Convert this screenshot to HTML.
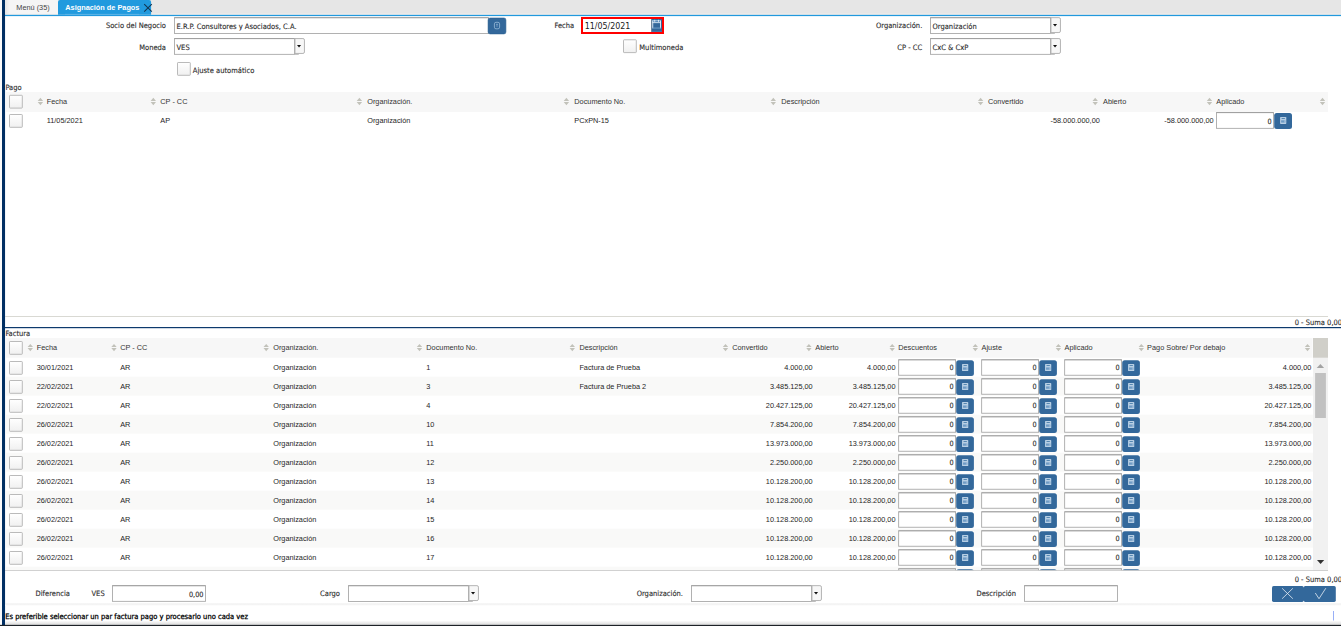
<!DOCTYPE html>
<html lang="es"><head><meta charset="utf-8"><title>Asignación de Pagos</title>
<style>
html,body{margin:0;padding:0;}
body{width:1341px;height:626px;position:relative;overflow:hidden;background:#fff;font-family:"Liberation Sans",sans-serif;font-size:7.33px;color:#222;}
#shapes{position:absolute;left:0;top:0;}
#txt div{position:absolute;white-space:nowrap;line-height:10px;}
.g{font-family:"Liberation Sans",sans-serif;font-size:7.33px;color:#1e1e1e;}
.f{font-family:"DejaVu Sans Condensed","Liberation Sans",sans-serif;font-size:7.5px;color:#2e2e2e;-webkit-text-stroke:0.12px #2e2e2e;}
.n{font-family:"DejaVu Sans Condensed","Liberation Sans",sans-serif;font-size:7.2px;color:#262626;-webkit-text-stroke:0.1px #262626;}
.d{font-family:"DejaVu Sans Condensed","Liberation Sans",sans-serif;font-size:8.8px;color:#222;line-height:12px !important;}
.r{text-align:right;}
</style></head><body>
<svg id="shapes" width="1341" height="626" viewBox="0 0 1341 626">
<defs>
<linearGradient id="cbg" x1="0" y1="0" x2="0" y2="1"><stop offset="0" stop-color="#ffffff"/><stop offset="1" stop-color="#f0f0f0"/></linearGradient>
<linearGradient id="tabg" x1="0" y1="0" x2="1" y2="0"><stop offset="0" stop-color="#e6e6e6"/><stop offset="0.09" stop-color="#f5f5f5"/><stop offset="1" stop-color="#f5f5f5"/></linearGradient>
<linearGradient id="botg" x1="0" y1="0" x2="0" y2="1"><stop offset="0" stop-color="#ffffff"/><stop offset="1" stop-color="#dadada"/></linearGradient>
<linearGradient id="stg" x1="0" y1="0" x2="0" y2="1"><stop offset="0" stop-color="#ececec"/><stop offset="1" stop-color="#ffffff"/></linearGradient>
<clipPath id="gridclip"><rect x="5" y="357.7" width="1309" height="212.6"/></clipPath>
</defs>
<rect x="0" y="0" width="1341" height="626" fill="#fff"/>
<rect x="0" y="0" width="1341" height="14.8" fill="#e6e6e6"/>
<rect x="5" y="13.8" width="1336" height="1.05" fill="#fff4ee"/>
<rect x="0" y="0" width="2" height="626" fill="#fafafa"/>
<rect x="5" y="14.8" width="1336" height="1.3" fill="#2299dd"/>
<rect x="2" y="0" width="3.05" height="626" fill="#002f63"/>
<rect x="5" y="0" width="53" height="13.9" fill="url(#tabg)"/>
<path d="M58 14.8 V2 a2 2 0 0 1 2 -2 H149.1 a2 2 0 0 1 2 2 V14.8 Z" fill="#219ade"/>
<path d="M65 14.3 H139" fill="none" stroke="#6cbdea" stroke-width="0.5"/>
<path d="M144.2 4.1 L151.8 11.7 M151.8 4.1 L144.2 11.7" fill="none" stroke="#123450" stroke-width="1.05"/>
<rect x="174.45" y="17.65" width="314.1" height="15.799999999999999" fill="#fff" stroke="#a9a9a9" stroke-width="0.9"/>
<path d="M174.5 17.75 H488.5" fill="none" stroke="#969696" stroke-width="0.7"/>
<rect x="488.1" y="18" width="17.8" height="15.9" fill="#33689b" rx="2" stroke="#2a6090" stroke-width="0.6"/>
<rect x="494.4" y="22.3" width="5.2" height="6.5" fill="none" rx="1.6" stroke="#8fb2d2" stroke-width="0.9"/>
<path d="M496 24.3 h2 M497 24.3 v2.6" fill="none" stroke="#8fb2d2" stroke-width="0.7"/>
<rect x="582" y="18" width="81" height="15" fill="#fff" stroke="#ff0000" stroke-width="2"/>
<rect x="651.3" y="19" width="10.7" height="12.9" fill="#33689b"/>
<rect x="651.3" y="19" width="0.6" height="12.9" fill="#6a7a88"/>
<rect x="652.3" y="20.3" width="8.6" height="2.4" fill="#5a8dbd"/>
<rect x="652.3" y="20.5" width="0.9" height="7.8" fill="#e6eff8"/>
<rect x="660.0" y="20.5" width="0.9" height="7.8" fill="#e6eff8"/>
<rect x="652.3" y="22.3" width="8.6" height="0.8" fill="#e6eff8"/>
<rect x="652.3" y="20.2" width="8.6" height="0.7" fill="#a9c6e0"/>
<rect x="654.3" y="19.8" width="0.9" height="2.0" fill="#e6eff8"/>
<rect x="658.0" y="19.8" width="0.9" height="2.0" fill="#e6eff8"/>
<rect x="652.3" y="27.6" width="8.6" height="0.9" fill="#79a4cb"/>
<rect x="930.45" y="17.65" width="120.1" height="15.799999999999999" fill="#fff" stroke="#a9a9a9" stroke-width="0.9"/>
<path d="M930.5 17.75 H1050.5" fill="none" stroke="#969696" stroke-width="0.7"/>
<rect x="1050" y="33.0" width="4.8" height="0.9" fill="#b9b9b9"/>
<path d="M1050.95 17.65 h8 a1.5 1.5 0 0 1 1.5 1.5 v11.9 a1.5 1.5 0 0 1 -1.5 1.5 h-8 z" fill="#f7f7f7" stroke="#ababab" stroke-width="0.9"/>
<path d="M1053 24.1 h4.1 l-2.05 2.5 z" fill="#111"/>
<rect x="174.45" y="38.550000000000004" width="120.1" height="15.799999999999999" fill="#fff" stroke="#a9a9a9" stroke-width="0.9"/>
<path d="M174.5 38.65 H294.5" fill="none" stroke="#969696" stroke-width="0.7"/>
<rect x="294" y="53.900000000000006" width="4.8" height="0.9" fill="#b9b9b9"/>
<path d="M294.95 38.550000000000004 h8 a1.5 1.5 0 0 1 1.5 1.5 v11.9 a1.5 1.5 0 0 1 -1.5 1.5 h-8 z" fill="#f7f7f7" stroke="#ababab" stroke-width="0.9"/>
<path d="M297 45.0 h4.1 l-2.05 2.5 z" fill="#111"/>
<rect x="623.5" y="39.8" width="12.8" height="12.8" fill="url(#cbg)" rx="0.6" stroke="#b2b2b2" stroke-width="0.9"/>
<rect x="930.45" y="38.550000000000004" width="120.1" height="15.799999999999999" fill="#fff" stroke="#a9a9a9" stroke-width="0.9"/>
<path d="M930.5 38.65 H1050.5" fill="none" stroke="#969696" stroke-width="0.7"/>
<rect x="1050" y="53.900000000000006" width="4.8" height="0.9" fill="#b9b9b9"/>
<path d="M1050.95 38.550000000000004 h8 a1.5 1.5 0 0 1 1.5 1.5 v11.9 a1.5 1.5 0 0 1 -1.5 1.5 h-8 z" fill="#f7f7f7" stroke="#ababab" stroke-width="0.9"/>
<path d="M1053 45.0 h4.1 l-2.05 2.5 z" fill="#111"/>
<rect x="177.5" y="62.5" width="12.8" height="12.8" fill="url(#cbg)" rx="0.6" stroke="#b2b2b2" stroke-width="0.9"/>
<rect x="6" y="91.9" width="1322" height="20" fill="#f7f7f7"/>
<rect x="9.5" y="95.3" width="12.8" height="12.8" fill="url(#cbg)" rx="0.6" stroke="#b2b2b2" stroke-width="0.9"/>
<path d="M37.699999999999996 101.0 L40.4 97.8 L43.1 101.0Z M37.699999999999996 102.0 L40.4 105.2 L43.1 102.0Z" fill="#c2c2ba"/>
<path d="M150.60000000000002 101.0 L153.3 97.8 L156.0 101.0Z M150.60000000000002 102.0 L153.3 105.2 L156.0 102.0Z" fill="#c2c2ba"/>
<path d="M356.7 101.0 L359.4 97.8 L362.09999999999997 101.0Z M356.7 102.0 L359.4 105.2 L362.09999999999997 102.0Z" fill="#c2c2ba"/>
<path d="M563.6999999999999 101.0 L566.4 97.8 L569.1 101.0Z M563.6999999999999 102.0 L566.4 105.2 L569.1 102.0Z" fill="#c2c2ba"/>
<path d="M770.5999999999999 101.0 L773.3 97.8 L776.0 101.0Z M770.5999999999999 102.0 L773.3 105.2 L776.0 102.0Z" fill="#c2c2ba"/>
<path d="M977.9 101.0 L980.6 97.8 L983.3000000000001 101.0Z M977.9 102.0 L980.6 105.2 L983.3000000000001 102.0Z" fill="#c2c2ba"/>
<path d="M1092.5 101.0 L1095.2 97.8 L1097.9 101.0Z M1092.5 102.0 L1095.2 105.2 L1097.9 102.0Z" fill="#c2c2ba"/>
<path d="M1206.8 101.0 L1209.5 97.8 L1212.2 101.0Z M1206.8 102.0 L1209.5 105.2 L1212.2 102.0Z" fill="#c2c2ba"/>
<path d="M1319.8 101.0 L1322.5 97.8 L1325.2 101.0Z M1319.8 102.0 L1322.5 105.2 L1325.2 102.0Z" fill="#c2c2ba"/>
<rect x="9.5" y="114.5" width="12.8" height="12.8" fill="url(#cbg)" rx="0.6" stroke="#b2b2b2" stroke-width="0.9"/>
<rect x="1216.45" y="112.55" width="57.1" height="15.799999999999999" fill="#fff" stroke="#a9a9a9" stroke-width="0.9"/>
<path d="M1216.5 112.64999999999999 H1273.5" fill="none" stroke="#969696" stroke-width="0.7"/>
<rect x="1274.2" y="112.9" width="17.8" height="16" fill="#33689b" rx="2.5"/>
<rect x="1280.1000000000001" y="116.9" width="6.2" height="7.0" fill="#b8cfe4" rx="0.6"/>
<rect x="1281.6000000000001" y="118.0" width="3.3" height="0.8" fill="#3f76a6"/>
<rect x="1281.1000000000001" y="120.30000000000001" width="4.3" height="2.3" fill="#6d9ac4"/>
<rect x="1284.0000000000002" y="120.30000000000001" width="0.5" height="2.3" fill="#b8cfe4"/>
<rect x="5" y="316" width="1323" height="0.7" fill="#c9c9c1"/>
<rect x="5" y="327" width="1336" height="1.2" fill="#0d3a6d"/>
<rect x="6" y="338" width="1306.5" height="19.7" fill="#f7f7f7"/>
<rect x="9.5" y="341.5" width="12.8" height="12.8" fill="url(#cbg)" rx="0.6" stroke="#b2b2b2" stroke-width="0.9"/>
<path d="M27.6 347.1 L30.3 343.90000000000003 L33.0 347.1Z M27.6 348.1 L30.3 351.3 L33.0 348.1Z" fill="#c2c2ba"/>
<path d="M111.3 347.1 L114.0 343.90000000000003 L116.7 347.1Z M111.3 348.1 L114.0 351.3 L116.7 348.1Z" fill="#c2c2ba"/>
<path d="M263.5 347.1 L266.2 343.90000000000003 L268.9 347.1Z M263.5 348.1 L266.2 351.3 L268.9 348.1Z" fill="#c2c2ba"/>
<path d="M416.8 347.1 L419.5 343.90000000000003 L422.2 347.1Z M416.8 348.1 L419.5 351.3 L422.2 348.1Z" fill="#c2c2ba"/>
<path d="M569.5999999999999 347.1 L572.3 343.90000000000003 L575.0 347.1Z M569.5999999999999 348.1 L572.3 351.3 L575.0 348.1Z" fill="#c2c2ba"/>
<path d="M722.8 347.1 L725.5 343.90000000000003 L728.2 347.1Z M722.8 348.1 L725.5 351.3 L728.2 348.1Z" fill="#c2c2ba"/>
<path d="M806.1999999999999 347.1 L808.9 343.90000000000003 L811.6 347.1Z M806.1999999999999 348.1 L808.9 351.3 L811.6 348.1Z" fill="#c2c2ba"/>
<path d="M889.5 347.1 L892.2 343.90000000000003 L894.9000000000001 347.1Z M889.5 348.1 L892.2 351.3 L894.9000000000001 348.1Z" fill="#c2c2ba"/>
<path d="M972.5999999999999 347.1 L975.3 343.90000000000003 L978.0 347.1Z M972.5999999999999 348.1 L975.3 351.3 L978.0 348.1Z" fill="#c2c2ba"/>
<path d="M1055.7 347.1 L1058.4 343.90000000000003 L1061.1000000000001 347.1Z M1055.7 348.1 L1058.4 351.3 L1061.1000000000001 348.1Z" fill="#c2c2ba"/>
<path d="M1138.6 347.1 L1141.3 343.90000000000003 L1144.0 347.1Z M1138.6 348.1 L1141.3 351.3 L1144.0 348.1Z" fill="#c2c2ba"/>
<path d="M1304.8 347.1 L1307.5 343.90000000000003 L1310.2 347.1Z M1304.8 348.1 L1307.5 351.3 L1310.2 348.1Z" fill="#c2c2ba"/>
<g clip-path="url(#gridclip)">
<rect x="9.5" y="361.5" width="12.8" height="12.8" fill="url(#cbg)" rx="0.6" stroke="#b2b2b2" stroke-width="0.9"/>
<rect x="898.6500000000001" y="359.75" width="56.9" height="15.499999999999998" fill="#fff" stroke="#a9a9a9" stroke-width="0.9"/>
<path d="M898.7 359.85 H955.5" fill="none" stroke="#969696" stroke-width="0.7"/>
<rect x="956.2" y="360.2" width="17.7" height="15.7" fill="#33689b" rx="2.5"/>
<rect x="962.0500000000001" y="364.05" width="6.2" height="7.0" fill="#b8cfe4" rx="0.6"/>
<rect x="963.5500000000001" y="365.15000000000003" width="3.3" height="0.8" fill="#3f76a6"/>
<rect x="963.0500000000001" y="367.45" width="4.3" height="2.3" fill="#6d9ac4"/>
<rect x="965.95" y="367.45" width="0.5" height="2.3" fill="#b8cfe4"/>
<rect x="981.6500000000001" y="359.75" width="56.9" height="15.499999999999998" fill="#fff" stroke="#a9a9a9" stroke-width="0.9"/>
<path d="M981.7 359.85 H1038.5" fill="none" stroke="#969696" stroke-width="0.7"/>
<rect x="1039.2" y="360.2" width="17.7" height="15.7" fill="#33689b" rx="2.5"/>
<rect x="1045.05" y="364.05" width="6.2" height="7.0" fill="#b8cfe4" rx="0.6"/>
<rect x="1046.55" y="365.15000000000003" width="3.3" height="0.8" fill="#3f76a6"/>
<rect x="1046.05" y="367.45" width="4.3" height="2.3" fill="#6d9ac4"/>
<rect x="1048.95" y="367.45" width="0.5" height="2.3" fill="#b8cfe4"/>
<rect x="1064.65" y="359.75" width="56.9" height="15.499999999999998" fill="#fff" stroke="#a9a9a9" stroke-width="0.9"/>
<path d="M1064.7 359.85 H1121.5" fill="none" stroke="#969696" stroke-width="0.7"/>
<rect x="1122.2" y="360.2" width="17.7" height="15.7" fill="#33689b" rx="2.5"/>
<rect x="1128.05" y="364.05" width="6.2" height="7.0" fill="#b8cfe4" rx="0.6"/>
<rect x="1129.55" y="365.15000000000003" width="3.3" height="0.8" fill="#3f76a6"/>
<rect x="1129.05" y="367.45" width="4.3" height="2.3" fill="#6d9ac4"/>
<rect x="1131.95" y="367.45" width="0.5" height="2.3" fill="#b8cfe4"/>
<rect x="6" y="376.7" width="1307" height="19" fill="#f9f9f8"/>
<rect x="9.5" y="380.5" width="12.8" height="12.8" fill="url(#cbg)" rx="0.6" stroke="#b2b2b2" stroke-width="0.9"/>
<rect x="898.6500000000001" y="378.75" width="56.9" height="15.499999999999998" fill="#fff" stroke="#a9a9a9" stroke-width="0.9"/>
<path d="M898.7 378.85 H955.5" fill="none" stroke="#969696" stroke-width="0.7"/>
<rect x="956.2" y="379.2" width="17.7" height="15.7" fill="#33689b" rx="2.5"/>
<rect x="962.0500000000001" y="383.05" width="6.2" height="7.0" fill="#b8cfe4" rx="0.6"/>
<rect x="963.5500000000001" y="384.15000000000003" width="3.3" height="0.8" fill="#3f76a6"/>
<rect x="963.0500000000001" y="386.45" width="4.3" height="2.3" fill="#6d9ac4"/>
<rect x="965.95" y="386.45" width="0.5" height="2.3" fill="#b8cfe4"/>
<rect x="981.6500000000001" y="378.75" width="56.9" height="15.499999999999998" fill="#fff" stroke="#a9a9a9" stroke-width="0.9"/>
<path d="M981.7 378.85 H1038.5" fill="none" stroke="#969696" stroke-width="0.7"/>
<rect x="1039.2" y="379.2" width="17.7" height="15.7" fill="#33689b" rx="2.5"/>
<rect x="1045.05" y="383.05" width="6.2" height="7.0" fill="#b8cfe4" rx="0.6"/>
<rect x="1046.55" y="384.15000000000003" width="3.3" height="0.8" fill="#3f76a6"/>
<rect x="1046.05" y="386.45" width="4.3" height="2.3" fill="#6d9ac4"/>
<rect x="1048.95" y="386.45" width="0.5" height="2.3" fill="#b8cfe4"/>
<rect x="1064.65" y="378.75" width="56.9" height="15.499999999999998" fill="#fff" stroke="#a9a9a9" stroke-width="0.9"/>
<path d="M1064.7 378.85 H1121.5" fill="none" stroke="#969696" stroke-width="0.7"/>
<rect x="1122.2" y="379.2" width="17.7" height="15.7" fill="#33689b" rx="2.5"/>
<rect x="1128.05" y="383.05" width="6.2" height="7.0" fill="#b8cfe4" rx="0.6"/>
<rect x="1129.55" y="384.15000000000003" width="3.3" height="0.8" fill="#3f76a6"/>
<rect x="1129.05" y="386.45" width="4.3" height="2.3" fill="#6d9ac4"/>
<rect x="1131.95" y="386.45" width="0.5" height="2.3" fill="#b8cfe4"/>
<rect x="9.5" y="399.5" width="12.8" height="12.8" fill="url(#cbg)" rx="0.6" stroke="#b2b2b2" stroke-width="0.9"/>
<rect x="898.6500000000001" y="397.75" width="56.9" height="15.499999999999998" fill="#fff" stroke="#a9a9a9" stroke-width="0.9"/>
<path d="M898.7 397.85 H955.5" fill="none" stroke="#969696" stroke-width="0.7"/>
<rect x="956.2" y="398.2" width="17.7" height="15.7" fill="#33689b" rx="2.5"/>
<rect x="962.0500000000001" y="402.05" width="6.2" height="7.0" fill="#b8cfe4" rx="0.6"/>
<rect x="963.5500000000001" y="403.15000000000003" width="3.3" height="0.8" fill="#3f76a6"/>
<rect x="963.0500000000001" y="405.45" width="4.3" height="2.3" fill="#6d9ac4"/>
<rect x="965.95" y="405.45" width="0.5" height="2.3" fill="#b8cfe4"/>
<rect x="981.6500000000001" y="397.75" width="56.9" height="15.499999999999998" fill="#fff" stroke="#a9a9a9" stroke-width="0.9"/>
<path d="M981.7 397.85 H1038.5" fill="none" stroke="#969696" stroke-width="0.7"/>
<rect x="1039.2" y="398.2" width="17.7" height="15.7" fill="#33689b" rx="2.5"/>
<rect x="1045.05" y="402.05" width="6.2" height="7.0" fill="#b8cfe4" rx="0.6"/>
<rect x="1046.55" y="403.15000000000003" width="3.3" height="0.8" fill="#3f76a6"/>
<rect x="1046.05" y="405.45" width="4.3" height="2.3" fill="#6d9ac4"/>
<rect x="1048.95" y="405.45" width="0.5" height="2.3" fill="#b8cfe4"/>
<rect x="1064.65" y="397.75" width="56.9" height="15.499999999999998" fill="#fff" stroke="#a9a9a9" stroke-width="0.9"/>
<path d="M1064.7 397.85 H1121.5" fill="none" stroke="#969696" stroke-width="0.7"/>
<rect x="1122.2" y="398.2" width="17.7" height="15.7" fill="#33689b" rx="2.5"/>
<rect x="1128.05" y="402.05" width="6.2" height="7.0" fill="#b8cfe4" rx="0.6"/>
<rect x="1129.55" y="403.15000000000003" width="3.3" height="0.8" fill="#3f76a6"/>
<rect x="1129.05" y="405.45" width="4.3" height="2.3" fill="#6d9ac4"/>
<rect x="1131.95" y="405.45" width="0.5" height="2.3" fill="#b8cfe4"/>
<rect x="6" y="414.7" width="1307" height="19" fill="#f9f9f8"/>
<rect x="9.5" y="418.5" width="12.8" height="12.8" fill="url(#cbg)" rx="0.6" stroke="#b2b2b2" stroke-width="0.9"/>
<rect x="898.6500000000001" y="416.75" width="56.9" height="15.499999999999998" fill="#fff" stroke="#a9a9a9" stroke-width="0.9"/>
<path d="M898.7 416.85 H955.5" fill="none" stroke="#969696" stroke-width="0.7"/>
<rect x="956.2" y="417.2" width="17.7" height="15.7" fill="#33689b" rx="2.5"/>
<rect x="962.0500000000001" y="421.05" width="6.2" height="7.0" fill="#b8cfe4" rx="0.6"/>
<rect x="963.5500000000001" y="422.15000000000003" width="3.3" height="0.8" fill="#3f76a6"/>
<rect x="963.0500000000001" y="424.45" width="4.3" height="2.3" fill="#6d9ac4"/>
<rect x="965.95" y="424.45" width="0.5" height="2.3" fill="#b8cfe4"/>
<rect x="981.6500000000001" y="416.75" width="56.9" height="15.499999999999998" fill="#fff" stroke="#a9a9a9" stroke-width="0.9"/>
<path d="M981.7 416.85 H1038.5" fill="none" stroke="#969696" stroke-width="0.7"/>
<rect x="1039.2" y="417.2" width="17.7" height="15.7" fill="#33689b" rx="2.5"/>
<rect x="1045.05" y="421.05" width="6.2" height="7.0" fill="#b8cfe4" rx="0.6"/>
<rect x="1046.55" y="422.15000000000003" width="3.3" height="0.8" fill="#3f76a6"/>
<rect x="1046.05" y="424.45" width="4.3" height="2.3" fill="#6d9ac4"/>
<rect x="1048.95" y="424.45" width="0.5" height="2.3" fill="#b8cfe4"/>
<rect x="1064.65" y="416.75" width="56.9" height="15.499999999999998" fill="#fff" stroke="#a9a9a9" stroke-width="0.9"/>
<path d="M1064.7 416.85 H1121.5" fill="none" stroke="#969696" stroke-width="0.7"/>
<rect x="1122.2" y="417.2" width="17.7" height="15.7" fill="#33689b" rx="2.5"/>
<rect x="1128.05" y="421.05" width="6.2" height="7.0" fill="#b8cfe4" rx="0.6"/>
<rect x="1129.55" y="422.15000000000003" width="3.3" height="0.8" fill="#3f76a6"/>
<rect x="1129.05" y="424.45" width="4.3" height="2.3" fill="#6d9ac4"/>
<rect x="1131.95" y="424.45" width="0.5" height="2.3" fill="#b8cfe4"/>
<rect x="9.5" y="437.5" width="12.8" height="12.8" fill="url(#cbg)" rx="0.6" stroke="#b2b2b2" stroke-width="0.9"/>
<rect x="898.6500000000001" y="435.75" width="56.9" height="15.499999999999998" fill="#fff" stroke="#a9a9a9" stroke-width="0.9"/>
<path d="M898.7 435.85 H955.5" fill="none" stroke="#969696" stroke-width="0.7"/>
<rect x="956.2" y="436.2" width="17.7" height="15.7" fill="#33689b" rx="2.5"/>
<rect x="962.0500000000001" y="440.05" width="6.2" height="7.0" fill="#b8cfe4" rx="0.6"/>
<rect x="963.5500000000001" y="441.15000000000003" width="3.3" height="0.8" fill="#3f76a6"/>
<rect x="963.0500000000001" y="443.45" width="4.3" height="2.3" fill="#6d9ac4"/>
<rect x="965.95" y="443.45" width="0.5" height="2.3" fill="#b8cfe4"/>
<rect x="981.6500000000001" y="435.75" width="56.9" height="15.499999999999998" fill="#fff" stroke="#a9a9a9" stroke-width="0.9"/>
<path d="M981.7 435.85 H1038.5" fill="none" stroke="#969696" stroke-width="0.7"/>
<rect x="1039.2" y="436.2" width="17.7" height="15.7" fill="#33689b" rx="2.5"/>
<rect x="1045.05" y="440.05" width="6.2" height="7.0" fill="#b8cfe4" rx="0.6"/>
<rect x="1046.55" y="441.15000000000003" width="3.3" height="0.8" fill="#3f76a6"/>
<rect x="1046.05" y="443.45" width="4.3" height="2.3" fill="#6d9ac4"/>
<rect x="1048.95" y="443.45" width="0.5" height="2.3" fill="#b8cfe4"/>
<rect x="1064.65" y="435.75" width="56.9" height="15.499999999999998" fill="#fff" stroke="#a9a9a9" stroke-width="0.9"/>
<path d="M1064.7 435.85 H1121.5" fill="none" stroke="#969696" stroke-width="0.7"/>
<rect x="1122.2" y="436.2" width="17.7" height="15.7" fill="#33689b" rx="2.5"/>
<rect x="1128.05" y="440.05" width="6.2" height="7.0" fill="#b8cfe4" rx="0.6"/>
<rect x="1129.55" y="441.15000000000003" width="3.3" height="0.8" fill="#3f76a6"/>
<rect x="1129.05" y="443.45" width="4.3" height="2.3" fill="#6d9ac4"/>
<rect x="1131.95" y="443.45" width="0.5" height="2.3" fill="#b8cfe4"/>
<rect x="6" y="452.7" width="1307" height="19" fill="#f9f9f8"/>
<rect x="9.5" y="456.5" width="12.8" height="12.8" fill="url(#cbg)" rx="0.6" stroke="#b2b2b2" stroke-width="0.9"/>
<rect x="898.6500000000001" y="454.75" width="56.9" height="15.499999999999998" fill="#fff" stroke="#a9a9a9" stroke-width="0.9"/>
<path d="M898.7 454.85 H955.5" fill="none" stroke="#969696" stroke-width="0.7"/>
<rect x="956.2" y="455.2" width="17.7" height="15.7" fill="#33689b" rx="2.5"/>
<rect x="962.0500000000001" y="459.05" width="6.2" height="7.0" fill="#b8cfe4" rx="0.6"/>
<rect x="963.5500000000001" y="460.15000000000003" width="3.3" height="0.8" fill="#3f76a6"/>
<rect x="963.0500000000001" y="462.45" width="4.3" height="2.3" fill="#6d9ac4"/>
<rect x="965.95" y="462.45" width="0.5" height="2.3" fill="#b8cfe4"/>
<rect x="981.6500000000001" y="454.75" width="56.9" height="15.499999999999998" fill="#fff" stroke="#a9a9a9" stroke-width="0.9"/>
<path d="M981.7 454.85 H1038.5" fill="none" stroke="#969696" stroke-width="0.7"/>
<rect x="1039.2" y="455.2" width="17.7" height="15.7" fill="#33689b" rx="2.5"/>
<rect x="1045.05" y="459.05" width="6.2" height="7.0" fill="#b8cfe4" rx="0.6"/>
<rect x="1046.55" y="460.15000000000003" width="3.3" height="0.8" fill="#3f76a6"/>
<rect x="1046.05" y="462.45" width="4.3" height="2.3" fill="#6d9ac4"/>
<rect x="1048.95" y="462.45" width="0.5" height="2.3" fill="#b8cfe4"/>
<rect x="1064.65" y="454.75" width="56.9" height="15.499999999999998" fill="#fff" stroke="#a9a9a9" stroke-width="0.9"/>
<path d="M1064.7 454.85 H1121.5" fill="none" stroke="#969696" stroke-width="0.7"/>
<rect x="1122.2" y="455.2" width="17.7" height="15.7" fill="#33689b" rx="2.5"/>
<rect x="1128.05" y="459.05" width="6.2" height="7.0" fill="#b8cfe4" rx="0.6"/>
<rect x="1129.55" y="460.15000000000003" width="3.3" height="0.8" fill="#3f76a6"/>
<rect x="1129.05" y="462.45" width="4.3" height="2.3" fill="#6d9ac4"/>
<rect x="1131.95" y="462.45" width="0.5" height="2.3" fill="#b8cfe4"/>
<rect x="9.5" y="475.5" width="12.8" height="12.8" fill="url(#cbg)" rx="0.6" stroke="#b2b2b2" stroke-width="0.9"/>
<rect x="898.6500000000001" y="473.75" width="56.9" height="15.499999999999998" fill="#fff" stroke="#a9a9a9" stroke-width="0.9"/>
<path d="M898.7 473.85 H955.5" fill="none" stroke="#969696" stroke-width="0.7"/>
<rect x="956.2" y="474.2" width="17.7" height="15.7" fill="#33689b" rx="2.5"/>
<rect x="962.0500000000001" y="478.05" width="6.2" height="7.0" fill="#b8cfe4" rx="0.6"/>
<rect x="963.5500000000001" y="479.15000000000003" width="3.3" height="0.8" fill="#3f76a6"/>
<rect x="963.0500000000001" y="481.45" width="4.3" height="2.3" fill="#6d9ac4"/>
<rect x="965.95" y="481.45" width="0.5" height="2.3" fill="#b8cfe4"/>
<rect x="981.6500000000001" y="473.75" width="56.9" height="15.499999999999998" fill="#fff" stroke="#a9a9a9" stroke-width="0.9"/>
<path d="M981.7 473.85 H1038.5" fill="none" stroke="#969696" stroke-width="0.7"/>
<rect x="1039.2" y="474.2" width="17.7" height="15.7" fill="#33689b" rx="2.5"/>
<rect x="1045.05" y="478.05" width="6.2" height="7.0" fill="#b8cfe4" rx="0.6"/>
<rect x="1046.55" y="479.15000000000003" width="3.3" height="0.8" fill="#3f76a6"/>
<rect x="1046.05" y="481.45" width="4.3" height="2.3" fill="#6d9ac4"/>
<rect x="1048.95" y="481.45" width="0.5" height="2.3" fill="#b8cfe4"/>
<rect x="1064.65" y="473.75" width="56.9" height="15.499999999999998" fill="#fff" stroke="#a9a9a9" stroke-width="0.9"/>
<path d="M1064.7 473.85 H1121.5" fill="none" stroke="#969696" stroke-width="0.7"/>
<rect x="1122.2" y="474.2" width="17.7" height="15.7" fill="#33689b" rx="2.5"/>
<rect x="1128.05" y="478.05" width="6.2" height="7.0" fill="#b8cfe4" rx="0.6"/>
<rect x="1129.55" y="479.15000000000003" width="3.3" height="0.8" fill="#3f76a6"/>
<rect x="1129.05" y="481.45" width="4.3" height="2.3" fill="#6d9ac4"/>
<rect x="1131.95" y="481.45" width="0.5" height="2.3" fill="#b8cfe4"/>
<rect x="6" y="490.7" width="1307" height="19" fill="#f9f9f8"/>
<rect x="9.5" y="494.5" width="12.8" height="12.8" fill="url(#cbg)" rx="0.6" stroke="#b2b2b2" stroke-width="0.9"/>
<rect x="898.6500000000001" y="492.75" width="56.9" height="15.499999999999998" fill="#fff" stroke="#a9a9a9" stroke-width="0.9"/>
<path d="M898.7 492.85 H955.5" fill="none" stroke="#969696" stroke-width="0.7"/>
<rect x="956.2" y="493.2" width="17.7" height="15.7" fill="#33689b" rx="2.5"/>
<rect x="962.0500000000001" y="497.05" width="6.2" height="7.0" fill="#b8cfe4" rx="0.6"/>
<rect x="963.5500000000001" y="498.15000000000003" width="3.3" height="0.8" fill="#3f76a6"/>
<rect x="963.0500000000001" y="500.45" width="4.3" height="2.3" fill="#6d9ac4"/>
<rect x="965.95" y="500.45" width="0.5" height="2.3" fill="#b8cfe4"/>
<rect x="981.6500000000001" y="492.75" width="56.9" height="15.499999999999998" fill="#fff" stroke="#a9a9a9" stroke-width="0.9"/>
<path d="M981.7 492.85 H1038.5" fill="none" stroke="#969696" stroke-width="0.7"/>
<rect x="1039.2" y="493.2" width="17.7" height="15.7" fill="#33689b" rx="2.5"/>
<rect x="1045.05" y="497.05" width="6.2" height="7.0" fill="#b8cfe4" rx="0.6"/>
<rect x="1046.55" y="498.15000000000003" width="3.3" height="0.8" fill="#3f76a6"/>
<rect x="1046.05" y="500.45" width="4.3" height="2.3" fill="#6d9ac4"/>
<rect x="1048.95" y="500.45" width="0.5" height="2.3" fill="#b8cfe4"/>
<rect x="1064.65" y="492.75" width="56.9" height="15.499999999999998" fill="#fff" stroke="#a9a9a9" stroke-width="0.9"/>
<path d="M1064.7 492.85 H1121.5" fill="none" stroke="#969696" stroke-width="0.7"/>
<rect x="1122.2" y="493.2" width="17.7" height="15.7" fill="#33689b" rx="2.5"/>
<rect x="1128.05" y="497.05" width="6.2" height="7.0" fill="#b8cfe4" rx="0.6"/>
<rect x="1129.55" y="498.15000000000003" width="3.3" height="0.8" fill="#3f76a6"/>
<rect x="1129.05" y="500.45" width="4.3" height="2.3" fill="#6d9ac4"/>
<rect x="1131.95" y="500.45" width="0.5" height="2.3" fill="#b8cfe4"/>
<rect x="9.5" y="513.5" width="12.8" height="12.8" fill="url(#cbg)" rx="0.6" stroke="#b2b2b2" stroke-width="0.9"/>
<rect x="898.6500000000001" y="511.75" width="56.9" height="15.499999999999998" fill="#fff" stroke="#a9a9a9" stroke-width="0.9"/>
<path d="M898.7 511.85 H955.5" fill="none" stroke="#969696" stroke-width="0.7"/>
<rect x="956.2" y="512.2" width="17.7" height="15.7" fill="#33689b" rx="2.5"/>
<rect x="962.0500000000001" y="516.0500000000001" width="6.2" height="7.0" fill="#b8cfe4" rx="0.6"/>
<rect x="963.5500000000001" y="517.1500000000001" width="3.3" height="0.8" fill="#3f76a6"/>
<rect x="963.0500000000001" y="519.45" width="4.3" height="2.3" fill="#6d9ac4"/>
<rect x="965.95" y="519.45" width="0.5" height="2.3" fill="#b8cfe4"/>
<rect x="981.6500000000001" y="511.75" width="56.9" height="15.499999999999998" fill="#fff" stroke="#a9a9a9" stroke-width="0.9"/>
<path d="M981.7 511.85 H1038.5" fill="none" stroke="#969696" stroke-width="0.7"/>
<rect x="1039.2" y="512.2" width="17.7" height="15.7" fill="#33689b" rx="2.5"/>
<rect x="1045.05" y="516.0500000000001" width="6.2" height="7.0" fill="#b8cfe4" rx="0.6"/>
<rect x="1046.55" y="517.1500000000001" width="3.3" height="0.8" fill="#3f76a6"/>
<rect x="1046.05" y="519.45" width="4.3" height="2.3" fill="#6d9ac4"/>
<rect x="1048.95" y="519.45" width="0.5" height="2.3" fill="#b8cfe4"/>
<rect x="1064.65" y="511.75" width="56.9" height="15.499999999999998" fill="#fff" stroke="#a9a9a9" stroke-width="0.9"/>
<path d="M1064.7 511.85 H1121.5" fill="none" stroke="#969696" stroke-width="0.7"/>
<rect x="1122.2" y="512.2" width="17.7" height="15.7" fill="#33689b" rx="2.5"/>
<rect x="1128.05" y="516.0500000000001" width="6.2" height="7.0" fill="#b8cfe4" rx="0.6"/>
<rect x="1129.55" y="517.1500000000001" width="3.3" height="0.8" fill="#3f76a6"/>
<rect x="1129.05" y="519.45" width="4.3" height="2.3" fill="#6d9ac4"/>
<rect x="1131.95" y="519.45" width="0.5" height="2.3" fill="#b8cfe4"/>
<rect x="6" y="528.7" width="1307" height="19" fill="#f9f9f8"/>
<rect x="9.5" y="532.5" width="12.8" height="12.8" fill="url(#cbg)" rx="0.6" stroke="#b2b2b2" stroke-width="0.9"/>
<rect x="898.6500000000001" y="530.7500000000001" width="56.9" height="15.499999999999998" fill="#fff" stroke="#a9a9a9" stroke-width="0.9"/>
<path d="M898.7 530.85 H955.5" fill="none" stroke="#969696" stroke-width="0.7"/>
<rect x="956.2" y="531.2" width="17.7" height="15.7" fill="#33689b" rx="2.5"/>
<rect x="962.0500000000001" y="535.0500000000001" width="6.2" height="7.0" fill="#b8cfe4" rx="0.6"/>
<rect x="963.5500000000001" y="536.1500000000001" width="3.3" height="0.8" fill="#3f76a6"/>
<rect x="963.0500000000001" y="538.45" width="4.3" height="2.3" fill="#6d9ac4"/>
<rect x="965.95" y="538.45" width="0.5" height="2.3" fill="#b8cfe4"/>
<rect x="981.6500000000001" y="530.7500000000001" width="56.9" height="15.499999999999998" fill="#fff" stroke="#a9a9a9" stroke-width="0.9"/>
<path d="M981.7 530.85 H1038.5" fill="none" stroke="#969696" stroke-width="0.7"/>
<rect x="1039.2" y="531.2" width="17.7" height="15.7" fill="#33689b" rx="2.5"/>
<rect x="1045.05" y="535.0500000000001" width="6.2" height="7.0" fill="#b8cfe4" rx="0.6"/>
<rect x="1046.55" y="536.1500000000001" width="3.3" height="0.8" fill="#3f76a6"/>
<rect x="1046.05" y="538.45" width="4.3" height="2.3" fill="#6d9ac4"/>
<rect x="1048.95" y="538.45" width="0.5" height="2.3" fill="#b8cfe4"/>
<rect x="1064.65" y="530.7500000000001" width="56.9" height="15.499999999999998" fill="#fff" stroke="#a9a9a9" stroke-width="0.9"/>
<path d="M1064.7 530.85 H1121.5" fill="none" stroke="#969696" stroke-width="0.7"/>
<rect x="1122.2" y="531.2" width="17.7" height="15.7" fill="#33689b" rx="2.5"/>
<rect x="1128.05" y="535.0500000000001" width="6.2" height="7.0" fill="#b8cfe4" rx="0.6"/>
<rect x="1129.55" y="536.1500000000001" width="3.3" height="0.8" fill="#3f76a6"/>
<rect x="1129.05" y="538.45" width="4.3" height="2.3" fill="#6d9ac4"/>
<rect x="1131.95" y="538.45" width="0.5" height="2.3" fill="#b8cfe4"/>
<rect x="9.5" y="551.5" width="12.8" height="12.8" fill="url(#cbg)" rx="0.6" stroke="#b2b2b2" stroke-width="0.9"/>
<rect x="898.6500000000001" y="549.7500000000001" width="56.9" height="15.499999999999998" fill="#fff" stroke="#a9a9a9" stroke-width="0.9"/>
<path d="M898.7 549.85 H955.5" fill="none" stroke="#969696" stroke-width="0.7"/>
<rect x="956.2" y="550.2" width="17.7" height="15.7" fill="#33689b" rx="2.5"/>
<rect x="962.0500000000001" y="554.0500000000001" width="6.2" height="7.0" fill="#b8cfe4" rx="0.6"/>
<rect x="963.5500000000001" y="555.1500000000001" width="3.3" height="0.8" fill="#3f76a6"/>
<rect x="963.0500000000001" y="557.45" width="4.3" height="2.3" fill="#6d9ac4"/>
<rect x="965.95" y="557.45" width="0.5" height="2.3" fill="#b8cfe4"/>
<rect x="981.6500000000001" y="549.7500000000001" width="56.9" height="15.499999999999998" fill="#fff" stroke="#a9a9a9" stroke-width="0.9"/>
<path d="M981.7 549.85 H1038.5" fill="none" stroke="#969696" stroke-width="0.7"/>
<rect x="1039.2" y="550.2" width="17.7" height="15.7" fill="#33689b" rx="2.5"/>
<rect x="1045.05" y="554.0500000000001" width="6.2" height="7.0" fill="#b8cfe4" rx="0.6"/>
<rect x="1046.55" y="555.1500000000001" width="3.3" height="0.8" fill="#3f76a6"/>
<rect x="1046.05" y="557.45" width="4.3" height="2.3" fill="#6d9ac4"/>
<rect x="1048.95" y="557.45" width="0.5" height="2.3" fill="#b8cfe4"/>
<rect x="1064.65" y="549.7500000000001" width="56.9" height="15.499999999999998" fill="#fff" stroke="#a9a9a9" stroke-width="0.9"/>
<path d="M1064.7 549.85 H1121.5" fill="none" stroke="#969696" stroke-width="0.7"/>
<rect x="1122.2" y="550.2" width="17.7" height="15.7" fill="#33689b" rx="2.5"/>
<rect x="1128.05" y="554.0500000000001" width="6.2" height="7.0" fill="#b8cfe4" rx="0.6"/>
<rect x="1129.55" y="555.1500000000001" width="3.3" height="0.8" fill="#3f76a6"/>
<rect x="1129.05" y="557.45" width="4.3" height="2.3" fill="#6d9ac4"/>
<rect x="1131.95" y="557.45" width="0.5" height="2.3" fill="#b8cfe4"/>
<rect x="6" y="566.7" width="1307" height="19" fill="#f9f9f8"/>
<rect x="898.6500000000001" y="568.7500000000001" width="56.9" height="15.499999999999998" fill="#fff" stroke="#a9a9a9" stroke-width="0.9"/>
<path d="M898.7 568.85 H955.5" fill="none" stroke="#969696" stroke-width="0.7"/>
<rect x="956.2" y="569.2" width="17.7" height="15.7" fill="#33689b" rx="2.5"/>
<rect x="962.0500000000001" y="573.0500000000001" width="6.2" height="7.0" fill="#b8cfe4" rx="0.6"/>
<rect x="963.5500000000001" y="574.1500000000001" width="3.3" height="0.8" fill="#3f76a6"/>
<rect x="963.0500000000001" y="576.45" width="4.3" height="2.3" fill="#6d9ac4"/>
<rect x="965.95" y="576.45" width="0.5" height="2.3" fill="#b8cfe4"/>
<rect x="981.6500000000001" y="568.7500000000001" width="56.9" height="15.499999999999998" fill="#fff" stroke="#a9a9a9" stroke-width="0.9"/>
<path d="M981.7 568.85 H1038.5" fill="none" stroke="#969696" stroke-width="0.7"/>
<rect x="1039.2" y="569.2" width="17.7" height="15.7" fill="#33689b" rx="2.5"/>
<rect x="1045.05" y="573.0500000000001" width="6.2" height="7.0" fill="#b8cfe4" rx="0.6"/>
<rect x="1046.55" y="574.1500000000001" width="3.3" height="0.8" fill="#3f76a6"/>
<rect x="1046.05" y="576.45" width="4.3" height="2.3" fill="#6d9ac4"/>
<rect x="1048.95" y="576.45" width="0.5" height="2.3" fill="#b8cfe4"/>
<rect x="1064.65" y="568.7500000000001" width="56.9" height="15.499999999999998" fill="#fff" stroke="#a9a9a9" stroke-width="0.9"/>
<path d="M1064.7 568.85 H1121.5" fill="none" stroke="#969696" stroke-width="0.7"/>
<rect x="1122.2" y="569.2" width="17.7" height="15.7" fill="#33689b" rx="2.5"/>
<rect x="1128.05" y="573.0500000000001" width="6.2" height="7.0" fill="#b8cfe4" rx="0.6"/>
<rect x="1129.55" y="574.1500000000001" width="3.3" height="0.8" fill="#3f76a6"/>
<rect x="1129.05" y="576.45" width="4.3" height="2.3" fill="#6d9ac4"/>
<rect x="1131.95" y="576.45" width="0.5" height="2.3" fill="#b8cfe4"/>
</g>
<rect x="1313" y="338" width="15" height="232.5" fill="#f1f1f1"/>
<rect x="1313" y="338" width="15" height="19.7" fill="#d0cfc9"/>
<rect x="1315.1" y="373" width="10.8" height="45" fill="#c1c1c1"/>
<path d="M1316.7 367.9 L1320.4 363.9 L1324.1 367.9Z" fill="#a3a3a3"/>
<path d="M1317 560 L1324.2 560 L1320.6 564.1Z" fill="#333"/>
<rect x="5" y="570.2" width="1323" height="0.7" fill="#bdbdbd"/>
<rect x="112.45" y="585.6500000000001" width="93.1" height="15.700000000000001" fill="#fff" stroke="#a9a9a9" stroke-width="0.9"/>
<path d="M112.5 585.75 H205.5" fill="none" stroke="#969696" stroke-width="0.7"/>
<rect x="348.45" y="585.6500000000001" width="120.1" height="15.799999999999999" fill="#fff" stroke="#a9a9a9" stroke-width="0.9"/>
<path d="M348.5 585.75 H468.5" fill="none" stroke="#969696" stroke-width="0.7"/>
<rect x="468" y="601.0" width="4.8" height="0.9" fill="#b9b9b9"/>
<path d="M468.95 585.6500000000001 h8 a1.5 1.5 0 0 1 1.5 1.5 v11.9 a1.5 1.5 0 0 1 -1.5 1.5 h-8 z" fill="#f7f7f7" stroke="#ababab" stroke-width="0.9"/>
<path d="M471 592.1 h4.1 l-2.05 2.5 z" fill="#111"/>
<rect x="691.45" y="585.6500000000001" width="120.1" height="15.799999999999999" fill="#fff" stroke="#a9a9a9" stroke-width="0.9"/>
<path d="M691.5 585.75 H811.5" fill="none" stroke="#969696" stroke-width="0.7"/>
<rect x="811" y="601.0" width="4.8" height="0.9" fill="#b9b9b9"/>
<path d="M811.95 585.6500000000001 h8 a1.5 1.5 0 0 1 1.5 1.5 v11.9 a1.5 1.5 0 0 1 -1.5 1.5 h-8 z" fill="#f7f7f7" stroke="#ababab" stroke-width="0.9"/>
<path d="M814 592.1 h4.1 l-2.05 2.5 z" fill="#111"/>
<rect x="1024.45" y="585.6500000000001" width="93.1" height="15.700000000000001" fill="#fff" stroke="#a9a9a9" stroke-width="0.9"/>
<path d="M1024.5 585.75 H1117.5" fill="none" stroke="#969696" stroke-width="0.7"/>
<rect x="1272" y="586.1" width="31.75" height="15.8" fill="#33689b" rx="1.6"/>
<rect x="1303.65" y="586.1" width="32.15" height="15.8" fill="#33689b" rx="1.6"/>
<rect x="1302" y="587.6" width="4" height="12.8" fill="#33689b"/>
<path d="M1282.1 588.3 L1292.9 598.7 M1292.9 588.3 L1282.1 598.7" fill="none" stroke="#e4ecf4" stroke-width="0.8"/>
<path d="M1315.3 593 L1319 598.7 L1325.8 588.2" fill="none" stroke="#e4ecf4" stroke-width="0.8"/>
<rect x="5" y="603.5" width="1336" height="2.4" fill="url(#stg)"/>
<rect x="1333.2" y="611" width="0.8" height="10" fill="#7f9cf5"/>
<rect x="5" y="620.5" width="1336" height="4.4" fill="url(#botg)"/>
<rect x="0" y="624.85" width="1341" height="1.2" fill="#1d2228"/>
</svg>
<div id="txt">
<div class="g" style="left:16.3px;top:2.5px;color:#444">Menú (35)</div>
<div class="g" style="left:65.3px;top:2.5px;color:#fff;font-weight:bold">Asignación de Pagos</div>
<div class="f r" style="left:-34px;width:200px;top:20.5px;">Socio del Negocio</div>
<div class="f" style="left:176.6px;top:21.5px;">E.R.P. Consultores y Asociados, C.A.</div>
<div class="f r" style="left:374.2px;width:200px;top:20.5px;">Fecha</div>
<div class="d" style="left:584.8px;top:20.0px;">11/05/2021</div>
<div class="f r" style="left:722.3px;width:200px;top:20.5px;">Organización.</div>
<div class="f" style="left:932.5px;top:21.5px;">Organización</div>
<div class="f r" style="left:-34px;width:200px;top:42.5px;">Moneda</div>
<div class="f" style="left:176.5px;top:42.5px;">VES</div>
<div class="f" style="left:639.3px;top:42.5px;">Multimoneda</div>
<div class="f r" style="left:722.3px;width:200px;top:42.5px;">CP - CC</div>
<div class="f" style="left:932.5px;top:42.5px;">CxC &amp; CxP</div>
<div class="f" style="left:192.8px;top:65.5px;">Ajuste automático</div>
<div class="f" style="left:5.4px;top:82.5px;">Pago</div>
<div class="g" style="left:46.7px;top:96.5px;color:#333">Fecha</div>
<div class="g" style="left:160.3px;top:96.5px;color:#333">CP - CC</div>
<div class="g" style="left:367.2px;top:96.5px;color:#333">Organización.</div>
<div class="g" style="left:574.3px;top:96.5px;color:#333">Documento No.</div>
<div class="g" style="left:781.3px;top:96.5px;color:#333">Descripción</div>
<div class="g" style="left:988px;top:96.5px;color:#333">Convertido</div>
<div class="g" style="left:1103px;top:96.5px;color:#333">Abierto</div>
<div class="g" style="left:1216.3px;top:96.5px;color:#333">Aplicado</div>
<div class="g" style="left:46.7px;top:115.5px;">11/05/2021</div>
<div class="g" style="left:160.3px;top:115.5px;">AP</div>
<div class="g" style="left:367.2px;top:115.5px;">Organización</div>
<div class="g" style="left:574.3px;top:115.5px;">PCxPN-15</div>
<div class="g r" style="left:899.8px;width:200px;top:115.5px;">-58.000.000,00</div>
<div class="g r" style="left:1013.6px;width:200px;top:115.5px;">-58.000.000,00</div>
<div class="n r" style="left:1071.6px;width:200px;top:116.5px;">0</div>
<div class="f" style="left:1294.7px;top:317.5px;">0 - Suma 0,00</div>
<div class="f" style="left:5.4px;top:328.5px;">Factura</div>
<div class="g" style="left:36.7px;top:342.5px;color:#333">Fecha</div>
<div class="g" style="left:120.2px;top:342.5px;color:#333">CP - CC</div>
<div class="g" style="left:273.2px;top:342.5px;color:#333">Organización.</div>
<div class="g" style="left:426.3px;top:342.5px;color:#333">Documento No.</div>
<div class="g" style="left:579.4px;top:342.5px;color:#333">Descripción</div>
<div class="g" style="left:732.2px;top:342.5px;color:#333">Convertido</div>
<div class="g" style="left:815.3px;top:342.5px;color:#333">Abierto</div>
<div class="g" style="left:898.2px;top:342.5px;color:#333">Descuentos</div>
<div class="g" style="left:981.6px;top:342.5px;color:#333">Ajuste</div>
<div class="g" style="left:1064.5px;top:342.5px;color:#333">Aplicado</div>
<div class="g" style="left:1147.1px;top:342.5px;color:#333">Pago Sobre/ Por debajo</div>
<div class="g" style="left:36.7px;top:362.5px;">30/01/2021</div>
<div class="g" style="left:120.2px;top:362.5px;">AR</div>
<div class="g" style="left:273.2px;top:362.5px;">Organización</div>
<div class="g" style="left:426.3px;top:362.5px;">1</div>
<div class="g" style="left:579.4px;top:362.5px;">Factura de Prueba</div>
<div class="g r" style="left:612.7px;width:200px;top:362.5px;">4.000,00</div>
<div class="g r" style="left:695.5px;width:200px;top:362.5px;">4.000,00</div>
<div class="g r" style="left:1111.3px;width:200px;top:362.5px;">4.000,00</div>
<div class="n r" style="left:753.7px;width:200px;top:362.5px;">0</div>
<div class="n r" style="left:836.7px;width:200px;top:362.5px;">0</div>
<div class="n r" style="left:919.7px;width:200px;top:362.5px;">0</div>
<div class="g" style="left:36.7px;top:381.5px;">22/02/2021</div>
<div class="g" style="left:120.2px;top:381.5px;">AR</div>
<div class="g" style="left:273.2px;top:381.5px;">Organización</div>
<div class="g" style="left:426.3px;top:381.5px;">3</div>
<div class="g" style="left:579.4px;top:381.5px;">Factura de Prueba 2</div>
<div class="g r" style="left:612.7px;width:200px;top:381.5px;">3.485.125,00</div>
<div class="g r" style="left:695.5px;width:200px;top:381.5px;">3.485.125,00</div>
<div class="g r" style="left:1111.3px;width:200px;top:381.5px;">3.485.125,00</div>
<div class="n r" style="left:753.7px;width:200px;top:381.5px;">0</div>
<div class="n r" style="left:836.7px;width:200px;top:381.5px;">0</div>
<div class="n r" style="left:919.7px;width:200px;top:381.5px;">0</div>
<div class="g" style="left:36.7px;top:400.5px;">22/02/2021</div>
<div class="g" style="left:120.2px;top:400.5px;">AR</div>
<div class="g" style="left:273.2px;top:400.5px;">Organización</div>
<div class="g" style="left:426.3px;top:400.5px;">4</div>
<div class="g r" style="left:612.7px;width:200px;top:400.5px;">20.427.125,00</div>
<div class="g r" style="left:695.5px;width:200px;top:400.5px;">20.427.125,00</div>
<div class="g r" style="left:1111.3px;width:200px;top:400.5px;">20.427.125,00</div>
<div class="n r" style="left:753.7px;width:200px;top:400.5px;">0</div>
<div class="n r" style="left:836.7px;width:200px;top:400.5px;">0</div>
<div class="n r" style="left:919.7px;width:200px;top:400.5px;">0</div>
<div class="g" style="left:36.7px;top:419.5px;">26/02/2021</div>
<div class="g" style="left:120.2px;top:419.5px;">AR</div>
<div class="g" style="left:273.2px;top:419.5px;">Organización</div>
<div class="g" style="left:426.3px;top:419.5px;">10</div>
<div class="g r" style="left:612.7px;width:200px;top:419.5px;">7.854.200,00</div>
<div class="g r" style="left:695.5px;width:200px;top:419.5px;">7.854.200,00</div>
<div class="g r" style="left:1111.3px;width:200px;top:419.5px;">7.854.200,00</div>
<div class="n r" style="left:753.7px;width:200px;top:419.5px;">0</div>
<div class="n r" style="left:836.7px;width:200px;top:419.5px;">0</div>
<div class="n r" style="left:919.7px;width:200px;top:419.5px;">0</div>
<div class="g" style="left:36.7px;top:438.5px;">26/02/2021</div>
<div class="g" style="left:120.2px;top:438.5px;">AR</div>
<div class="g" style="left:273.2px;top:438.5px;">Organización</div>
<div class="g" style="left:426.3px;top:438.5px;">11</div>
<div class="g r" style="left:612.7px;width:200px;top:438.5px;">13.973.000,00</div>
<div class="g r" style="left:695.5px;width:200px;top:438.5px;">13.973.000,00</div>
<div class="g r" style="left:1111.3px;width:200px;top:438.5px;">13.973.000,00</div>
<div class="n r" style="left:753.7px;width:200px;top:438.5px;">0</div>
<div class="n r" style="left:836.7px;width:200px;top:438.5px;">0</div>
<div class="n r" style="left:919.7px;width:200px;top:438.5px;">0</div>
<div class="g" style="left:36.7px;top:457.5px;">26/02/2021</div>
<div class="g" style="left:120.2px;top:457.5px;">AR</div>
<div class="g" style="left:273.2px;top:457.5px;">Organización</div>
<div class="g" style="left:426.3px;top:457.5px;">12</div>
<div class="g r" style="left:612.7px;width:200px;top:457.5px;">2.250.000,00</div>
<div class="g r" style="left:695.5px;width:200px;top:457.5px;">2.250.000,00</div>
<div class="g r" style="left:1111.3px;width:200px;top:457.5px;">2.250.000,00</div>
<div class="n r" style="left:753.7px;width:200px;top:457.5px;">0</div>
<div class="n r" style="left:836.7px;width:200px;top:457.5px;">0</div>
<div class="n r" style="left:919.7px;width:200px;top:457.5px;">0</div>
<div class="g" style="left:36.7px;top:476.5px;">26/02/2021</div>
<div class="g" style="left:120.2px;top:476.5px;">AR</div>
<div class="g" style="left:273.2px;top:476.5px;">Organización</div>
<div class="g" style="left:426.3px;top:476.5px;">13</div>
<div class="g r" style="left:612.7px;width:200px;top:476.5px;">10.128.200,00</div>
<div class="g r" style="left:695.5px;width:200px;top:476.5px;">10.128.200,00</div>
<div class="g r" style="left:1111.3px;width:200px;top:476.5px;">10.128.200,00</div>
<div class="n r" style="left:753.7px;width:200px;top:476.5px;">0</div>
<div class="n r" style="left:836.7px;width:200px;top:476.5px;">0</div>
<div class="n r" style="left:919.7px;width:200px;top:476.5px;">0</div>
<div class="g" style="left:36.7px;top:495.5px;">26/02/2021</div>
<div class="g" style="left:120.2px;top:495.5px;">AR</div>
<div class="g" style="left:273.2px;top:495.5px;">Organización</div>
<div class="g" style="left:426.3px;top:495.5px;">14</div>
<div class="g r" style="left:612.7px;width:200px;top:495.5px;">10.128.200,00</div>
<div class="g r" style="left:695.5px;width:200px;top:495.5px;">10.128.200,00</div>
<div class="g r" style="left:1111.3px;width:200px;top:495.5px;">10.128.200,00</div>
<div class="n r" style="left:753.7px;width:200px;top:495.5px;">0</div>
<div class="n r" style="left:836.7px;width:200px;top:495.5px;">0</div>
<div class="n r" style="left:919.7px;width:200px;top:495.5px;">0</div>
<div class="g" style="left:36.7px;top:514.5px;">26/02/2021</div>
<div class="g" style="left:120.2px;top:514.5px;">AR</div>
<div class="g" style="left:273.2px;top:514.5px;">Organización</div>
<div class="g" style="left:426.3px;top:514.5px;">15</div>
<div class="g r" style="left:612.7px;width:200px;top:514.5px;">10.128.200,00</div>
<div class="g r" style="left:695.5px;width:200px;top:514.5px;">10.128.200,00</div>
<div class="g r" style="left:1111.3px;width:200px;top:514.5px;">10.128.200,00</div>
<div class="n r" style="left:753.7px;width:200px;top:514.5px;">0</div>
<div class="n r" style="left:836.7px;width:200px;top:514.5px;">0</div>
<div class="n r" style="left:919.7px;width:200px;top:514.5px;">0</div>
<div class="g" style="left:36.7px;top:533.5px;">26/02/2021</div>
<div class="g" style="left:120.2px;top:533.5px;">AR</div>
<div class="g" style="left:273.2px;top:533.5px;">Organización</div>
<div class="g" style="left:426.3px;top:533.5px;">16</div>
<div class="g r" style="left:612.7px;width:200px;top:533.5px;">10.128.200,00</div>
<div class="g r" style="left:695.5px;width:200px;top:533.5px;">10.128.200,00</div>
<div class="g r" style="left:1111.3px;width:200px;top:533.5px;">10.128.200,00</div>
<div class="n r" style="left:753.7px;width:200px;top:533.5px;">0</div>
<div class="n r" style="left:836.7px;width:200px;top:533.5px;">0</div>
<div class="n r" style="left:919.7px;width:200px;top:533.5px;">0</div>
<div class="g" style="left:36.7px;top:552.5px;">26/02/2021</div>
<div class="g" style="left:120.2px;top:552.5px;">AR</div>
<div class="g" style="left:273.2px;top:552.5px;">Organización</div>
<div class="g" style="left:426.3px;top:552.5px;">17</div>
<div class="g r" style="left:612.7px;width:200px;top:552.5px;">10.128.200,00</div>
<div class="g r" style="left:695.5px;width:200px;top:552.5px;">10.128.200,00</div>
<div class="g r" style="left:1111.3px;width:200px;top:552.5px;">10.128.200,00</div>
<div class="n r" style="left:753.7px;width:200px;top:552.5px;">0</div>
<div class="n r" style="left:836.7px;width:200px;top:552.5px;">0</div>
<div class="n r" style="left:919.7px;width:200px;top:552.5px;">0</div>
<div class="f" style="left:1294.7px;top:574.5px;">0 - Suma 0,00</div>
<div class="f r" style="left:-130.1px;width:200px;top:588.5px;">Diferencia</div>
<div class="f" style="left:91.5px;top:588.5px;">VES</div>
<div class="n r" style="left:3.4px;width:200px;top:589.5px;">0,00</div>
<div class="f r" style="left:140px;width:200px;top:588.5px;">Cargo</div>
<div class="f r" style="left:483px;width:200px;top:588.5px;">Organización.</div>
<div class="f r" style="left:816px;width:200px;top:588.5px;">Descripción</div>
<div class="f" style="left:5.3px;top:611.5px;color:#000;-webkit-text-stroke:0.25px #000">Es preferible seleccionar un par factura pago y procesarlo uno cada vez</div>
</div>
</body></html>
